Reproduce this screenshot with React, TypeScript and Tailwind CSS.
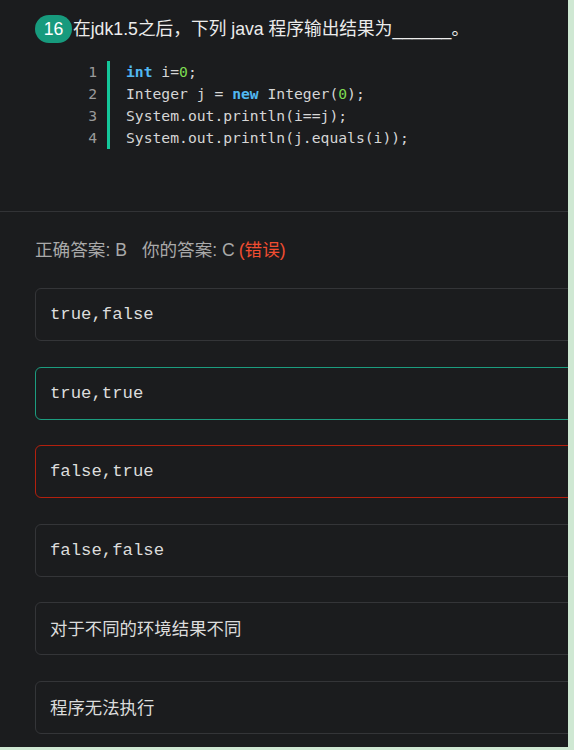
import React from 'react'

const CODE: { text: string; cls?: string }[][] = [
  [{ text: 'int', cls: 'text-[#51b8f2] font-bold' }, { text: ' i=' }, { text: '0', cls: 'text-[#7fdc52]' }, { text: ';' }],
  [{ text: 'Integer j = ' }, { text: 'new', cls: 'text-[#51b8f2] font-bold' }, { text: ' Integer(' }, { text: '0', cls: 'text-[#7fdc52]' }, { text: ');' }],
  [{ text: 'System.out.println(i==j);' }],
  [{ text: 'System.out.println(j.equals(i));' }],
]

type Option = { label: string; mono?: boolean; state?: 'right' | 'wrong' }

const OPTIONS: Option[] = [
  { label: 'true,false', mono: true },
  { label: 'true,true', mono: true, state: 'right' },
  { label: 'false,true', mono: true, state: 'wrong' },
  { label: 'false,false', mono: true },
  { label: '对于不同的环境结果不同' },
  { label: '程序无法执行' },
]

const sans = "font-['Liberation_Sans','Noto_Sans_CJK_SC',sans-serif]"

export default function App() {
  return (
    <div className="min-h-screen bg-[#cfe8d3]">
      <div className={`w-[568px] h-[747px] bg-[#1b1c1e] overflow-hidden ${sans}`}>
        {/* question */}
        <div className="pl-[35px] pt-[15px]">
          <div className="flex items-center h-[28px] text-[17.7px] text-[#ececec]">
            <span className="h-[28px] w-[37px] rounded-full bg-[#179a7d] text-white flex items-center justify-center">
              16
            </span>
            <span className="ml-[1px]">在jdk1.5之后，下列 java 程序输出结果为______。</span>
          </div>

          <div className="mt-[18px] flex font-['DejaVu_Sans_Mono',monospace] text-[14.7px] leading-[22px]">
            <div className="w-[62px] text-right text-[#9a9a9a]">
              {CODE.map((_, i) => (
                <div key={i}>{i + 1}</div>
              ))}
            </div>
            <div className="ml-[10px] w-[3px] bg-[#14c79a]" />
            <div className="ml-[16px] text-[#d6d6d6] whitespace-pre">
              {CODE.map((line, i) => (
                <div key={i}>
                  {line.map((t, j) => (
                    <span key={j} className={t.cls}>{t.text}</span>
                  ))}
                </div>
              ))}
            </div>
          </div>
        </div>

        {/* result */}
        <div className="mt-[62px] border-t border-[#323336] pl-[35px] pt-[26px]">
          <div className="h-[24px] flex items-center text-[17.6px] text-[#a9a9a9]">
            <span>正确答案: B</span>
            <span className="ml-[15px]">你的答案: C</span>
            <span className="ml-[4px] text-[#f04d31]">(错误)</span>
          </div>

          <div className="mt-[26px] flex flex-col gap-[25.6px]">
            {OPTIONS.map((o) => (
              <div
                key={o.label}
                className={`h-[53px] w-[560px] rounded-[6px] border flex items-center pl-[14px] pt-[1px] text-[#dcdcdc] ${
                  o.state === 'right'
                    ? 'border-[#1c9c7f]'
                    : o.state === 'wrong'
                      ? 'border-[#b3200e]'
                      : 'border-[#343538]'
                } ${o.mono ? "font-['Liberation_Mono',monospace] text-[17.3px]" : 'text-[17.4px]'}`}
              >
                {o.label}
              </div>
            ))}
          </div>
        </div>
      </div>
    </div>
  )
}
